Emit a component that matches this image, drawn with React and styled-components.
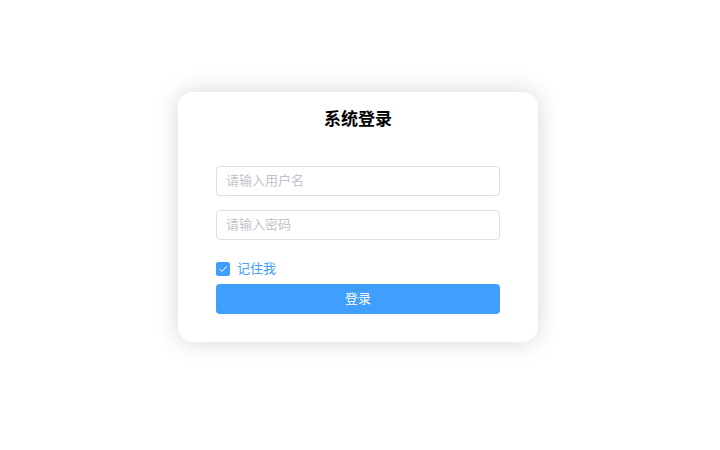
import React, { useState } from 'react';
import styled, { createGlobalStyle } from 'styled-components';

const GlobalStyle = createGlobalStyle`
  html, body {
    margin: 0;
    padding: 0;
    background: #fff;
    font-family: "Noto Sans CJK SC", "Noto Sans", sans-serif;
  }
`;

const Page = styled.div`
  display: flex;
  justify-content: center;
  align-items: flex-start;
  width: 720px;
  height: 450px;
  padding: 92px 4px 0 0;
  box-sizing: border-box;
`;

const Card = styled.form`
  width: 360px;
  box-sizing: border-box;
  padding: 15px 38px 28px;
  background: #fff;
  border-radius: 15px;
  box-shadow: 0 0 25px rgba(0, 0, 0, 0.16);
  display: flex;
  flex-direction: column;
`;

const Title = styled.h3`
  margin: 0 0 37px;
  text-align: center;
  font-size: 17px;
  line-height: 22px;
  font-weight: 700;
  color: #000;
`;

const Input = styled.input`
  height: 30px;
  box-sizing: border-box;
  border: 1px solid #dcdfe6;
  border-radius: 4px;
  padding: 0 9px 4px;
  margin-bottom: 14px;
  font-family: inherit;
  font-size: 13px;
  color: #606266;
  outline: none;
  &::placeholder {
    color: #c0c4cc;
  }
`;

const CheckRow = styled.label`
  display: flex;
  align-items: center;
  gap: 7px;
  height: 30px;
  color: #409eff;
  font-size: 13px;
  cursor: pointer;
`;

const CheckText = styled.span`
  margin-top: -3px;
`;

const Box = styled.span`
  width: 14px;
  height: 14px;
  border-radius: 2px;
  background: ${p => (p.checked ? '#409eff' : '#fff')};
  border: 1px solid ${p => (p.checked ? '#409eff' : '#dcdfe6')};
  box-sizing: border-box;
  display: flex;
  align-items: center;
  justify-content: center;
`;

const Button = styled.button`
  height: 30px;
  border: none;
  border-radius: 4px;
  padding: 0 0 4px;
  background: #409eff;
  color: #fff;
  font-family: inherit;
  font-size: 13px;
  cursor: pointer;
`;

function App() {
  const [remember, setRemember] = useState(true);
  return (
    <Page>
      <GlobalStyle />
      <Card onSubmit={e => e.preventDefault()}>
        <Title>系统登录</Title>
        <Input type="text" placeholder="请输入用户名" />
        <Input type="password" placeholder="请输入密码" />
        <CheckRow onClick={() => setRemember(!remember)}>
          <Box checked={remember}>
            {remember && (
              <svg width="10" height="10" viewBox="0 0 10 10">
                <path d="M1.5 5 L4 7.5 L8.8 2.2" fill="none" stroke="#fff" strokeWidth="1" />
              </svg>
            )}
          </Box>
          <CheckText>记住我</CheckText>
        </CheckRow>
        <Button type="submit">登录</Button>
      </Card>
    </Page>
  );
}

export default App;
